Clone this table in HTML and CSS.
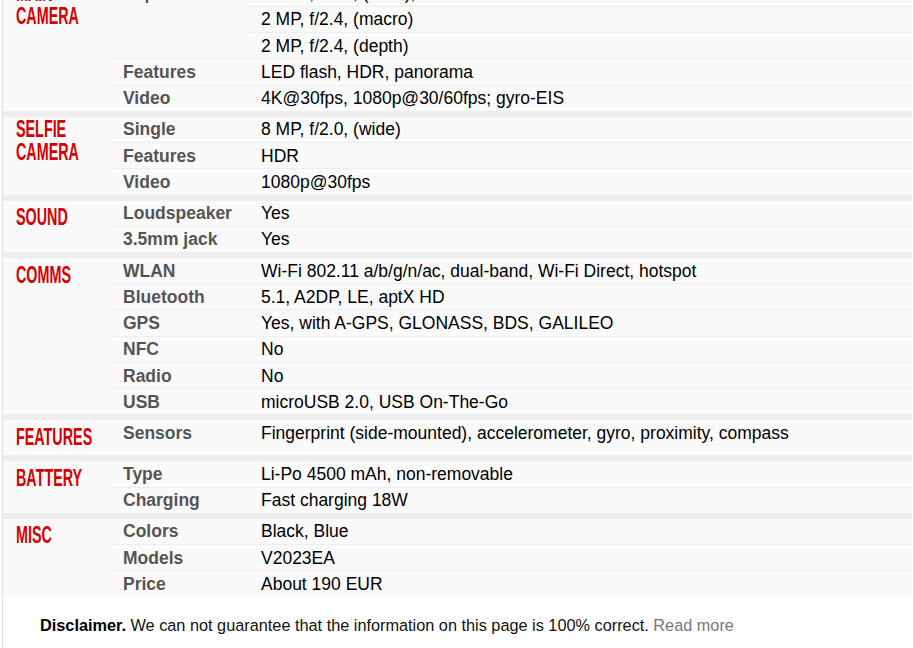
FILE: index.html
```html
<!DOCTYPE html>
<html>
<head>
<meta charset="utf-8">
<link rel="stylesheet" href="styles.css">
</head>
<body>
<div class="page">
  <div class="specs">
    <table class="sec">
      <colgroup><col class="c-h"><col class="c-t"><col></colgroup>
      <tr><th rowspan="5" class="two"><span class="h">Main<br>Camera</span></th><td class="ttl">Triple</td><td class="nfo">13 MP, f/2.2, (wide), PDAF</td></tr>
      <tr><td class="ttl empty"></td><td class="nfo">2 MP, f/2.4, (macro)</td></tr>
      <tr><td class="ttl empty"></td><td class="nfo">2 MP, f/2.4, (depth)</td></tr>
      <tr><td class="ttl">Features</td><td class="nfo">LED flash, HDR, panorama</td></tr>
      <tr><td class="ttl">Video</td><td class="nfo">4K@30fps, 1080p@30/60fps; gyro-EIS</td></tr>
    </table>
    <table class="sec">
      <colgroup><col class="c-h"><col class="c-t"><col></colgroup>
      <tr><th rowspan="3" class="two"><span class="h">Selfie<br>camera</span></th><td class="ttl">Single</td><td class="nfo">8 MP, f/2.0, (wide)</td></tr>
      <tr><td class="ttl">Features</td><td class="nfo">HDR</td></tr>
      <tr><td class="ttl">Video</td><td class="nfo">1080p@30fps</td></tr>
    </table>
    <table class="sec">
      <colgroup><col class="c-h"><col class="c-t"><col></colgroup>
      <tr><th rowspan="2"><span class="h">Sound</span></th><td class="ttl">Loudspeaker</td><td class="nfo">Yes</td></tr>
      <tr><td class="ttl">3.5mm jack</td><td class="nfo">Yes</td></tr>
    </table>
    <table class="sec">
      <colgroup><col class="c-h"><col class="c-t"><col></colgroup>
      <tr><th rowspan="6"><span class="h">Comms</span></th><td class="ttl">WLAN</td><td class="nfo">Wi-Fi 802.11 a/b/g/n/ac, dual-band, Wi-Fi Direct, hotspot</td></tr>
      <tr><td class="ttl">Bluetooth</td><td class="nfo">5.1, A2DP, LE, aptX HD</td></tr>
      <tr><td class="ttl">GPS</td><td class="nfo">Yes, with A-GPS, GLONASS, BDS, GALILEO</td></tr>
      <tr><td class="ttl">NFC</td><td class="nfo">No</td></tr>
      <tr><td class="ttl">Radio</td><td class="nfo">No</td></tr>
      <tr><td class="ttl">USB</td><td class="nfo">microUSB 2.0, USB On-The-Go</td></tr>
    </table>
    <table class="sec">
      <colgroup><col class="c-h"><col class="c-t"><col></colgroup>
      <tr><th><span class="h">Features</span></th><td class="ttl">Sensors</td><td class="nfo">Fingerprint (side-mounted), accelerometer, gyro, proximity, compass</td></tr>
    </table>
    <table class="sec">
      <colgroup><col class="c-h"><col class="c-t"><col></colgroup>
      <tr><th rowspan="2"><span class="h">Battery</span></th><td class="ttl">Type</td><td class="nfo">Li-Po 4500 mAh, non-removable</td></tr>
      <tr><td class="ttl">Charging</td><td class="nfo">Fast charging 18W</td></tr>
    </table>
    <table class="sec">
      <colgroup><col class="c-h"><col class="c-t"><col></colgroup>
      <tr><th rowspan="3"><span class="h">Misc</span></th><td class="ttl">Colors</td><td class="nfo">Black, Blue</td></tr>
      <tr><td class="ttl">Models</td><td class="nfo">V2023EA</td></tr>
      <tr><td class="ttl">Price</td><td class="nfo">About 190 EUR</td></tr>
    </table>
  </div>
  <p class="disclaimer"><b>Disclaimer.</b> We can not guarantee that the information on this page is 100% correct. <a class="more" href="#">Read more</a></p>
</div>
</body>
</html>
```
FILE: styles.css
```css
html, body {
  margin: 0;
  padding: 0;
  background: #fff;
}

.page {
  margin: -25.35px 0 0 2px;
  width: 910px;
  border-left: 1px solid #dedede;
  border-right: 1px solid #dedede;
  background: #fff;
  padding-bottom: 40px;
}

.specs {
  background: #eeeeee;
  margin-right: 1px;
}

.sec {
  width: 100%;
  border-collapse: separate;
  border-spacing: 0;
  table-layout: fixed;
  background: #fafafa;
  margin-top: 5px;
}

.c-h { width: 107px; }
.c-t { width: 138px; }

.sec th {
  text-align: left;
  vertical-align: top;
  padding: 5.5px 0 6.2px 13px;
  border-top: 1px solid #eeeeee;
  font-weight: normal;
}

.sec th.two {
  padding-top: 1px;
}

.h {
  display: inline-block;
  font-family: "Liberation Sans", Arial, sans-serif;
  font-weight: bold;
  font-size: 23.5px;
  line-height: 23.3px;
  color: #d50000;
  text-transform: uppercase;
  white-space: nowrap;
  transform: scaleX(0.61);
  transform-origin: 0 0;
}

.sec td {
  font-family: "Liberation Sans", Arial, sans-serif;
  font-size: 17.5px;
  line-height: 20px;
  padding: 2.6px 13px 2.65px 13px;
  border-top: 1px solid #eeeeee;
  vertical-align: top;
  white-space: nowrap;
}

.sec td.empty {
  border-top-color: transparent;
}

.ttl {
  font-weight: bold;
  color: #555555;
}

.nfo {
  color: #000000;
}

.disclaimer {
  margin: 0;
  padding: 19px 0 0 37px;
  font-family: "Liberation Sans", Arial, sans-serif;
  font-size: 16.3px;
  color: #111111;
}

.disclaimer b {
  color: #000;
}

.more {
  color: #777777;
  text-decoration: none;
}
```
